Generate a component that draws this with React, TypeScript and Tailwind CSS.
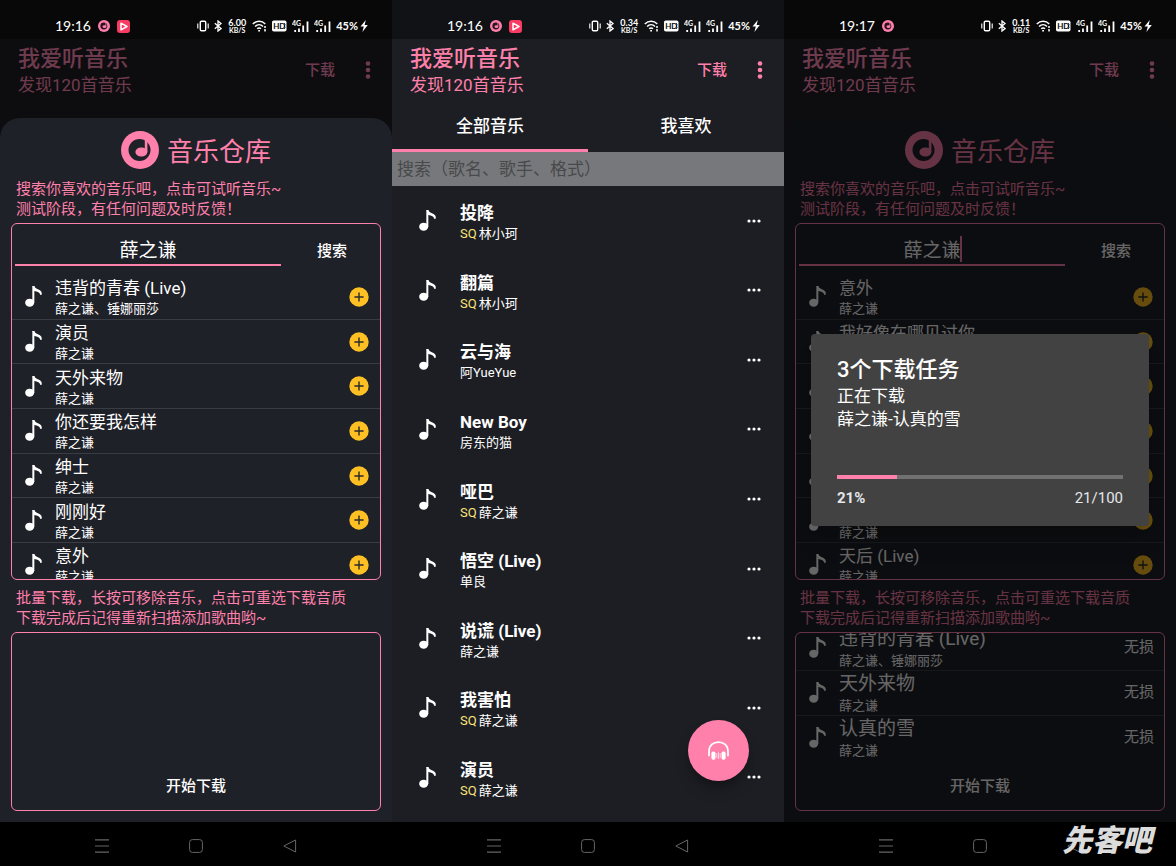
import React from 'react';
import clsx from 'clsx';

interface Song {
    title: string;
    artist: string;
    sq?: boolean;
}

const library: Song[] = [
    { title: '投降', artist: '林小珂', sq: true },
    { title: '翻篇', artist: '林小珂', sq: true },
    { title: '云与海', artist: '阿YueYue' },
    { title: 'New Boy', artist: '房东的猫' },
    { title: '哑巴', artist: '薛之谦', sq: true },
    { title: '悟空 (Live)', artist: '单良' },
    { title: '说谎 (Live)', artist: '薛之谦' },
    { title: '我害怕', artist: '薛之谦', sq: true },
    { title: '演员', artist: '薛之谦', sq: true },
];

const searchResults: Song[] = [
    { title: '违背的青春 (Live)', artist: '薛之谦、锤娜丽莎' },
    { title: '演员', artist: '薛之谦' },
    { title: '天外来物', artist: '薛之谦' },
    { title: '你还要我怎样', artist: '薛之谦' },
    { title: '绅士', artist: '薛之谦' },
    { title: '刚刚好', artist: '薛之谦' },
    { title: '意外', artist: '薛之谦' },
];

const moreResults: Song[] = [
    { title: '意外', artist: '薛之谦' },
    { title: '我好像在哪见过你', artist: '薛之谦' },
    { title: '演员', artist: '薛之谦' },
    { title: '天外来物', artist: '薛之谦' },
    { title: '绅士', artist: '薛之谦' },
    { title: '刚刚好', artist: '薛之谦' },
    { title: '天后 (Live)', artist: '薛之谦' },
];

const downloads: Song[] = [
    { title: '违背的青春 (Live)', artist: '薛之谦、锤娜丽莎' },
    { title: '天外来物', artist: '薛之谦' },
    { title: '认真的雪', artist: '薛之谦' },
];

/* ---------- icons ---------- */

const NoteIcon = () => (
    <svg viewBox="0 0 50 63" className="w-[17px] h-[21px] shrink-0" aria-hidden="true">
        <ellipse cx="13.5" cy="50" rx="13.5" ry="12" fill="#fff" />
        <path d="M24.5 51 V0" stroke="#fff" strokeWidth="6" />
        <path d="M22 0 H27.5 C29 7 37 9 43 12 C49 15 51 20 49 27 L45 26 C44 20 38 17 27 15Z" fill="#fff" />
    </svg>
);

const DiscLogo = ({ className, hole }: { className: string; hole: string }) => (
    <svg viewBox="0 0 38 38" className={className} aria-hidden="true">
        <circle cx="19" cy="19" r="19" fill="#ff80ab" />
        <circle cx="18.5" cy="19" r="11" fill={hole} />
        <ellipse cx="20.4" cy="21" rx="6" ry="4.6" fill="#ff80ab" />
        <path d="M23.8 6 H26.4 V21 H23.8Z" fill="#ff80ab" />
    </svg>
);

const PlusIcon = () => (
    <svg viewBox="0 0 20 20" className="w-5 h-5" aria-hidden="true">
        <circle cx="10" cy="10" r="9.7" fill="#ffc024" />
        <path d="M10 5.4v9.2M5.4 10h9.2" stroke="#2a2a2a" strokeWidth="1.4" />
    </svg>
);

const HeadphoneIcon = () => (
    <svg viewBox="0 0 62 56" className="w-[21px] h-[19px]" aria-hidden="true">
        <path d="M3 45 V31 C3 13 16 3 31 3 C46 3 59 13 59 31 V45" fill="none" stroke="#fff" strokeWidth="5" />
        <rect x="10" y="31" width="12" height="24" rx="5" fill="#fff" />
        <rect x="40" y="31" width="12" height="24" rx="5" fill="#fff" />
        <path d="M26 36v14M31 33v20M36 36v14" stroke="#fff" strokeWidth="2" />
    </svg>
);

const SignalIcon = () => (
    <svg viewBox="0 0 17 13" className="w-[17px] h-[13px]" aria-hidden="true">
        <text x="0" y="6" fontSize="7" fontWeight="700" fill="#fff">4G</text>
        <path d="M3.2 10v2M7 8.5V12M11.2 5.5V12M15.5 1.5V12" stroke="#fff" strokeWidth="1.8" />
    </svg>
);

/* ---------- shared bars ---------- */

interface StatusBarProps {
    time: string;
    speed: string;
    playing?: boolean;
    className: string;
}

const StatusBar: React.FC<StatusBarProps> = ({ time, speed, playing, className }) => (
    <div className={clsx('h-[39px] shrink-0 pt-[13px] pl-[55px] pr-6 flex items-center justify-between text-white font-[Lato,sans-serif]', className)}>
        <div className="flex items-center">
            <span className="w-[43px] text-sm leading-4">{time}</span>
            <DiscLogo className="w-3 h-3" hole="#2a1420" />
            {playing && (
                <svg viewBox="0 0 13 13" className="w-[13px] h-[13px] ml-[7px]" aria-hidden="true">
                    <rect width="13" height="13" rx="3" fill="#f83b62" />
                    <path d="M4 3.2 L10 6.5 L4 9.8Z" fill="none" stroke="#fff" strokeWidth="1.5" strokeLinejoin="round" />
                </svg>
            )}
        </div>

        <div className="flex items-center gap-[5px]">
            {/* vibrate */}
            <svg viewBox="0 0 12 12" className="w-3 h-3" fill="none" stroke="#fff" aria-hidden="true">
                <rect x="3.3" y="1.2" width="5.4" height="9.6" rx="1.2" strokeWidth="1.4" />
                <path d="M.8 3.5v5M11.2 3.5v5" strokeWidth="1.1" />
            </svg>
            {/* bluetooth */}
            <svg viewBox="0 0 8 12" className="w-2 h-3" fill="none" stroke="#fff" strokeWidth="1.3" aria-hidden="true">
                <path d="M.8 3.3 L7 8.6 L4 11 V1 L7 3.5 L.8 8.7" />
            </svg>
            <span className="w-5 flex flex-col items-center font-bold">
                <span className="text-[9px] leading-[8px]">{speed}</span>
                <span className="text-[7px] leading-[7px]">KB/S</span>
            </span>
            {/* wifi */}
            <svg viewBox="0 0 15 12" className="w-[15px] h-3" fill="none" stroke="#fff" strokeWidth="1.5" aria-hidden="true">
                <path d="M.8 4 C4.5 .4 9.8 .4 13.3 4M3.1 6.5 C5.4 4.3 8.8 4.3 11 6.5M5.2 8.8 C6.3 7.7 7.9 7.7 9 8.8" />
                <path d="M6.2 10.7h1.8M13 6v2M13 9v2.5" />
            </svg>
            <svg viewBox="0 0 15 12" className="w-[15px] h-3" aria-hidden="true">
                <rect y=".5" width="14.5" height="11" rx="1.8" fill="#fff" />
                <text x="1.2" y="9" fontSize="8" fontWeight="700" fill="#090909">HD</text>
                <path d="M12.3 3 q1.4 1.5 0 3 q1.4 1.5 0 3" fill="none" stroke="#090909" strokeWidth=".8" />
            </svg>
            <SignalIcon />
            <SignalIcon />
            <span className="flex items-center gap-[2px]">
                <span className="text-[11px] leading-3 font-bold">45%</span>
                <svg viewBox="0 0 8 12" className="w-2 h-3" aria-hidden="true">
                    <path d="M5.8 0 L.5 6.6 H3.8 L2.4 12 L7.8 5 H4.6Z" fill="#fff" />
                </svg>
            </span>
        </div>
    </div>
);

const AppHeader = ({ dim }: { dim?: boolean }) => (
    <header className={clsx('h-[63px] shrink-0 pl-[18px] pr-[21px] flex items-center text-[#ff80ab]', dim && 'opacity-40')}>
        <div className="flex-1">
            <h1 className="text-[22px] leading-7 font-medium">我爱听音乐</h1>
            <p className="text-[17px] leading-6">发现120首音乐</p>
        </div>
        <button className="text-[15px] font-medium">下载</button>
        <button className="ml-[30px]" aria-label="更多">
            <svg viewBox="0 0 6 20" className="w-[6px] h-5 fill-[#ff80ab]" aria-hidden="true">
                <circle cx="3" cy="2.5" r="2.3" />
                <circle cx="3" cy="9" r="2.3" />
                <circle cx="3" cy="15.5" r="2.3" />
            </svg>
        </button>
    </header>
);

const NavBar = () => (
    <nav className="h-11 shrink-0 pt-1 bg-black flex items-center justify-center gap-20">
        <button aria-label="菜单">
            <svg viewBox="0 0 14 14" className="w-[14px] h-[14px]" stroke="#666" aria-hidden="true">
                <path d="M0 .8h14M0 7h14M0 13.2h14" strokeWidth="1.2" />
            </svg>
        </button>
        <button aria-label="主页">
            <svg viewBox="0 0 14 14" className="w-[14px] h-[14px]" fill="none" stroke="#666" aria-hidden="true">
                <rect x=".6" y=".6" width="12.8" height="12.8" rx="2.8" />
            </svg>
        </button>
        <button aria-label="返回">
            <svg viewBox="0 0 14 14" className="w-[14px] h-[14px]" fill="none" stroke="#666" strokeLinejoin="round" aria-hidden="true">
                <path d="M12.6 1 V13 L.8 7Z" />
            </svg>
        </button>
    </nav>
);

/* ---------- music store sheet ---------- */

interface SheetProps {
    id: string;
    results: Song[];
    queue: Song[];
    dim?: boolean;
}

const StoreSheet: React.FC<SheetProps> = ({ id, results, queue, dim }) => (
    <section className="relative flex-1 mt-4 pt-[13px] px-[11px] pb-[11px] flex flex-col bg-[#1f2128] rounded-t-[20px] overflow-hidden">
        <div className="flex items-center justify-center gap-2 text-[#ff80ab]">
            <DiscLogo className="w-[38px] h-[38px]" hole="#1f2128" />
            <h2 className="pt-1 text-[26px] leading-[34px]">音乐仓库</h2>
        </div>
        <p className="mt-[10px] px-[5px] text-[15px] leading-5 text-[#ff80ab]">
            搜索你喜欢的音乐吧，点击可试听音乐~<br />
            测试阶段，有任何问题及时反馈！
        </p>

        <div className="mt-1 flex-[2] min-h-0 flex flex-col border border-[#ff80ab] rounded-md overflow-hidden">
            <div className="h-[51px] shrink-0 pl-[3px] flex items-start">
                <div className="relative flex-1">
                    <input
                        id={id}
                        aria-label="歌手"
                        defaultValue="薛之谦"
                        className="w-full h-[42px] pt-[9px] border-b-2 border-[#ff80ab] bg-transparent text-center text-[19px] text-white outline-none"
                    />
                    {dim && <span className="absolute left-1/2 top-3 ml-7 w-[2px] h-[26px] bg-[#ff80ab]" />}
                </div>
                <button className="w-24 h-[51px] ml-[3px] pt-[3px] text-[15px] font-medium text-white">搜索</button>
            </div>
            <div className="flex-1 min-h-0 flex flex-col overflow-hidden">
                <ul className="flex-1 -mb-2 flex flex-col">
                    {results.map((song, i) => (
                        <li key={song.title} className={clsx('flex-1 pl-[13px] pr-[11px] flex items-center gap-[13px]', i > 0 && 'border-t border-[#3a3c43]')}>
                            <NoteIcon />
                            <div className="flex-1 text-white">
                                <div className="text-[17px] leading-6">{song.title}</div>
                                <div className="text-[13px] leading-[17px]">{song.artist}</div>
                            </div>
                            <button aria-label={'添加 ' + song.title}><PlusIcon /></button>
                        </li>
                    ))}
                </ul>
            </div>
        </div>

        <p className="mt-2 px-[5px] text-[15px] leading-5 text-[#ff80ab]">
            批量下载，长按可移除音乐，点击可重选下载音质<br />
            下载完成后记得重新扫描添加歌曲哟~
        </p>

        <div className="mt-1 flex-1 min-h-0 flex flex-col border border-[#ff80ab] rounded-md overflow-hidden">
            <div className="flex-1 min-h-0 overflow-hidden">
                <ul className="-mt-2">
                    {queue.map((song, i) => (
                        <li key={song.title} className={clsx('h-[45px] pl-[13px] pr-[10px] flex items-center gap-[13px]', i > 0 && 'border-t border-[#3a3c43]')}>
                            <NoteIcon />
                            <div className="flex-1 text-white">
                                <div className="text-[19px] leading-[26px]">{song.title}</div>
                                <div className="text-[13px] leading-[17px]">{song.artist}</div>
                            </div>
                            <button className="text-[15px] text-white">无损</button>
                        </li>
                    ))}
                </ul>
            </div>
            <button className="h-12 shrink-0 text-[15px] font-medium text-white">开始下载</button>
        </div>

        {dim && <div className="absolute inset-0 bg-black/60" />}
    </section>
);

const DownloadDialog = ({ percent }: { percent: number }) => (
    <div className="absolute inset-0 px-[27px] pb-[6px] flex items-center">
        <div role="dialog" aria-label="下载任务" className="flex-1 px-[26px] pt-[21px] pb-[18px] bg-[#424242] rounded-sm shadow-xl text-white">
            <h2 className="text-[22px] leading-[30px] font-medium">3个下载任务</h2>
            <p className="text-[17px] leading-[23px]">
                正在下载<br />
                薛之谦-认真的雪
            </p>
            <div role="progressbar" aria-label="下载进度" aria-valuenow={percent} className="mt-11 h-1 bg-[#717171]">
                <div className="h-full bg-[#ff80ab]" style={{ width: percent + '%' }} />
            </div>
            <div className="mt-[9px] flex justify-between leading-5 text-gray-200">
                <span className="text-[15px] leading-5 font-bold">{percent}%</span>
                <span className="text-[15px] leading-5">{percent}/100</span>
            </div>
        </div>
    </div>
);

/* ---------- library ---------- */

const LibraryScreen = () => (
    <>
        <AppHeader />
        <div className="h-[50px] shrink-0 flex text-[17px] font-medium text-white">
            <button className="flex-1 pt-[3px] border-b-[3px] border-[#ff80ab]">全部音乐</button>
            <button className="flex-1 pt-[3px] border-b-[3px] border-transparent">我喜欢</button>
        </div>
        <input
            aria-label="搜索"
            placeholder="搜索（歌名、歌手、格式）"
            className="h-[34px] shrink-0 w-full px-[5px] bg-[#77787b] text-[17px] text-black placeholder:text-[#48494b] outline-none"
        />
        <ul className="flex-1 pb-[10px] flex flex-col">
            {library.map((song) => (
                <li key={song.title} className="flex-1 pl-[27px] pr-[23px] flex items-center text-white">
                    <NoteIcon />
                    <div className="flex-1 ml-6 pt-[2px]">
                        <div className="text-[17px] leading-6 font-bold">{song.title}</div>
                        <div className="text-[13px] leading-[17px]">
                            {song.sq && <span className="mr-[2px] text-[#fbe47a]">SQ</span>}
                            {song.artist}
                        </div>
                    </div>
                    <button aria-label={song.title + ' 更多'}>
                        <svg viewBox="0 0 14 4" className="w-[14px] h-1 fill-white" aria-hidden="true">
                            <circle cx="2" cy="2" r="1.6" />
                            <circle cx="7" cy="2" r="1.6" />
                            <circle cx="12" cy="2" r="1.6" />
                        </svg>
                    </button>
                </li>
            ))}
        </ul>
        <button
            aria-label="播放"
            className="absolute right-[35px] bottom-[85px] w-[61px] h-[61px] rounded-full bg-[#ff80ab] flex items-center justify-center shadow-lg shadow-black/30"
        >
            <HeadphoneIcon />
        </button>
    </>
);

const App: React.FC = () => {
    return (
        <main className="min-h-screen flex bg-black font-[Roboto,'Noto_Sans_CJK_SC',sans-serif]">
            <div className="relative flex-1 min-w-0 flex flex-col bg-[#0d0d10]">
                <StatusBar time="19:16" speed="6.00" playing className="bg-[#080808]" />
                <AppHeader dim />
                <StoreSheet id="singer" results={searchResults} queue={[]} />
                <NavBar />
            </div>

            <div className="relative flex-1 min-w-0 flex flex-col bg-[#1d1e23]">
                <StatusBar time="19:16" speed="0.34" playing className="bg-[#111215]" />
                <LibraryScreen />
                <NavBar />
            </div>

            <div className="relative flex-1 min-w-0 flex flex-col bg-[#0d0d10]">
                <StatusBar time="19:17" speed="0.11" className="bg-[#080808]" />
                <AppHeader dim />
                <StoreSheet id="singer-more" results={moreResults} queue={downloads} dim />
                <NavBar />
                <DownloadDialog percent={21} />
                <span className="absolute right-6 bottom-[9px] text-[30px] leading-8 font-black italic text-[#dcdcdc]">先客吧</span>
            </div>
        </main>
    );
};

export default App;
